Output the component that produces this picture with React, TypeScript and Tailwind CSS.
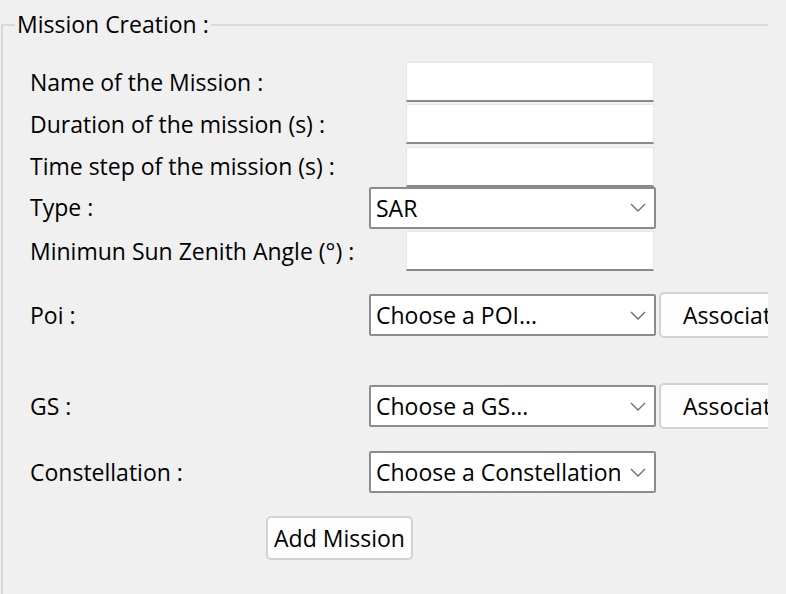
import { ReactNode } from "react";

const font = { fontFamily: '"Open Sans", "Noto Sans", sans-serif' };

function Chevron() {
  return (
    <svg width="16" height="9" viewBox="0 0 16 9" className="shrink-0">
      <path d="M1 1 L8 8 L15 1" fill="none" stroke="#6b6b6b" strokeWidth="1.3" />
    </svg>
  );
}

function TextBox() {
  return (
    <div className="ml-[37px] h-[40px] w-[248px] border border-b-2 border-[#e6e6e6] border-b-[#8a8a8a] bg-white" />
  );
}

function Combo(props: { value: string }) {
  return (
    <div className="flex h-[42px] w-[287px] items-center gap-[10px] overflow-hidden rounded-[2px] border-2 border-[#8c8c8c] bg-white pl-[5px] pr-[8px]">
      <span className="flex-1 overflow-hidden whitespace-nowrap leading-[30px]">{props.value}</span>
      <Chevron />
    </div>
  );
}

function AssociateButton() {
  return (
    <div className="ml-[3px] flex h-[46px] w-[140px] shrink-0 items-center rounded-[5px] border-2 border-[#d2d2d2] bg-[#fdfdfd] pl-[22px]">
      Associate
    </div>
  );
}

function Row(props: { label: string; height: string; mt: string; children: ReactNode }) {
  return (
    <div className={`flex items-center ${props.height} ${props.mt}`}>
      <div className="w-[339px] shrink-0 whitespace-nowrap">{props.label}</div>
      {props.children}
    </div>
  );
}

export default function App() {
  return (
    <div
      className="h-[594px] w-[786px] overflow-hidden bg-[#f0f0f0] text-[23px] leading-none text-black"
      style={font}
    >
      <div className="w-[768px] overflow-hidden">
        <fieldset className="ml-[1px] mt-[13px] h-[620px] w-[820px] border-2 border-r-0 border-b-0 border-[#d9d9d9] pl-[27px]">
          <legend className="-ml-[15px] px-[2px] whitespace-nowrap">Mission Creation :</legend>
          <div className="flex flex-col">
            <Row label="Name of the Mission :" height="h-[40px]" mt="mt-[26px]">
              <TextBox />
            </Row>
            <Row label="Duration of the mission (s) :" height="h-[40px]" mt="mt-[2px]">
              <TextBox />
            </Row>
            <Row label="Time step of the mission (s) :" height="h-[41px]" mt="mt-[2px]">
              <TextBox />
            </Row>
            <Row label="Type :" height="h-[41px]" mt="mt-0">
              <Combo value="SAR" />
            </Row>
            <Row label="Minimun Sun Zenith Angle (°) :" height="h-[40px]" mt="mt-[3px]">
              <TextBox />
            </Row>
            <Row label="Poi :" height="h-[46px]" mt="mt-[21px]">
              <Combo value="Choose a POI..." />
              <AssociateButton />
            </Row>
            <Row label="GS :" height="h-[46px]" mt="mt-[45px]">
              <Combo value="Choose a GS..." />
              <AssociateButton />
            </Row>
            <Row label="Constellation :" height="h-[42px]" mt="mt-[22px]">
              <Combo value="Choose a Constellation" />
            </Row>
            <div className="ml-[236px] mt-[23px] flex h-[44px] w-[147px] items-center justify-center rounded-[5px] border-2 border-[#d2d2d2] bg-[#fdfdfd]">
              Add Mission
            </div>
          </div>
        </fieldset>
      </div>
    </div>
  );
}
